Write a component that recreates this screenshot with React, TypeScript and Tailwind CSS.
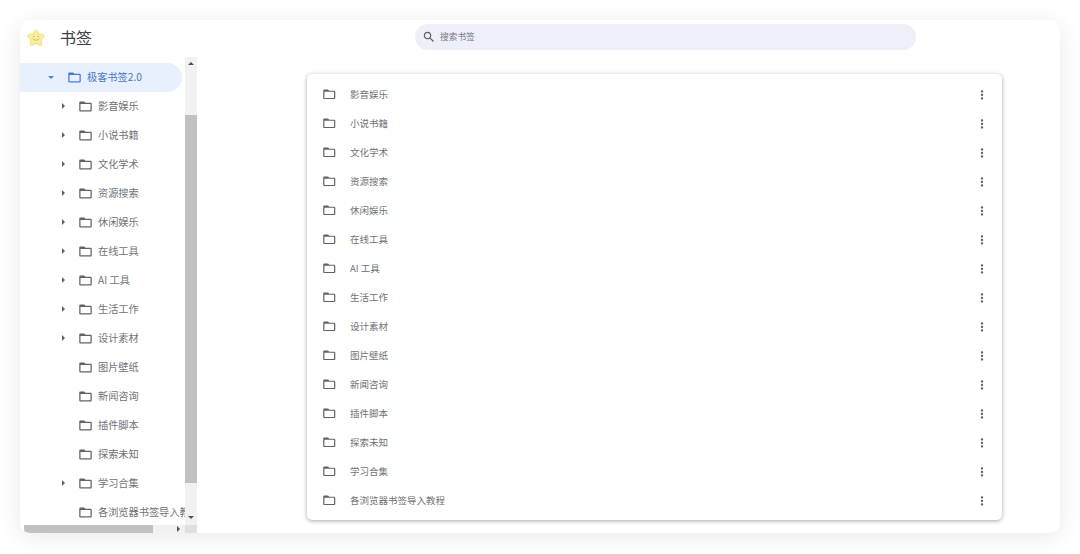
const FOLDER_PATH =
  "M20 6h-8l-2-2H4c-1.1 0-1.99.9-1.99 2L2 18c0 1.1.9 2 2 2h16c1.1 0 2-.9 2-2V8c0-1.1-.9-2-2-2zm0 12H4V8h16v10z";

const treeItems = [
  { name: "影音娱乐", hasChildren: true },
  { name: "小说书籍", hasChildren: true },
  { name: "文化学术", hasChildren: true },
  { name: "资源搜索", hasChildren: true },
  { name: "休闲娱乐", hasChildren: true },
  { name: "在线工具", hasChildren: true },
  { name: "AI 工具", hasChildren: true },
  { name: "生活工作", hasChildren: true },
  { name: "设计素材", hasChildren: true },
  { name: "图片壁纸", hasChildren: false },
  { name: "新闻咨询", hasChildren: false },
  { name: "插件脚本", hasChildren: false },
  { name: "探索未知", hasChildren: false },
  { name: "学习合集", hasChildren: true },
  { name: "各浏览器书签导入教程", hasChildren: false },
];

function FolderIcon({ className }: { className: string }) {
  return (
    <svg viewBox="0 0 24 24" fill="currentColor" className={className}>
      <path d={FOLDER_PATH} />
    </svg>
  );
}

function StarLogo() {
  return (
    <svg viewBox="0 0 24 24" className="h-[20px] w-[20px] shrink-0">
      <path
        d="M12 2.5c1 0 1.6 1 2.3 2.6l1 2.2 3.4.5c2 .3 3.1.7 3.3 1.6.2.9-.6 1.6-2 2.9l-2 1.9.6 3c.3 1.9.4 3-.4 3.5-.8.5-1.8 0-3.4-.9L12 18.4l-2.8 1.4c-1.6.9-2.6 1.4-3.4.9-.8-.5-.7-1.6-.4-3.5l.6-3-2-1.9c-1.4-1.3-2.2-2-2-2.9.2-.9 1.3-1.3 3.3-1.6l3.4-.5 1-2.2C10.4 3.5 11 2.5 12 2.5z"
        fill="#fbee9e"
        stroke="#f3dc7a"
        strokeWidth="1.2"
      />
      <path d="M8.5 13c1.5 2.3 5.5 2.3 7 0" fill="none" stroke="#b9a24a" strokeWidth="0.9" strokeLinecap="round" />
      <circle cx="9.5" cy="10" r="0.7" fill="#b9a24a" />
      <circle cx="14.5" cy="10" r="0.7" fill="#b9a24a" />
    </svg>
  );
}

function TreeRow({ name, hasChildren }: { name: string; hasChildren: boolean }) {
  return (
    <div className="flex h-[29px] shrink-0 items-center pl-[36px] text-[10.2px] whitespace-nowrap text-[#6f7276]">
      <span className="flex w-[12px] shrink-0 justify-center pl-[2px]">
        {hasChildren && (
          <span className="h-0 w-0 border-y-[3px] border-l-[3px] border-y-transparent border-l-[#5f6368]" />
        )}
      </span>
      <FolderIcon className="ml-[10px] h-[15px] w-[15px] shrink-0 text-[#5f6368]" />
      <span className="ml-[5px]">{name}</span>
    </div>
  );
}

function Sidebar() {
  return (
    <div className="flex w-[177px] shrink-0 flex-col">
      <div className="flex h-[468px]">
        <div className="flex w-[165px] flex-col overflow-hidden pt-[5.5px]">
          <div className="flex h-[29px] w-[162px] shrink-0 items-center rounded-r-full bg-[#e8f0fe] pl-[25px] text-[10.2px] whitespace-nowrap text-[#4a76c8]">
            <span className="flex w-[12px] shrink-0 justify-center">
              <span className="h-0 w-0 border-x-[3px] border-t-[3px] border-x-transparent border-t-[#4a7fd8]" />
            </span>
            <FolderIcon className="ml-[10px] h-[15px] w-[15px] shrink-0 text-[#3f7ddb]" />
            <span className="ml-[5px]">极客书签2.0</span>
          </div>
          {treeItems.map((item) => (
            <TreeRow key={item.name} name={item.name} hasChildren={item.hasChildren} />
          ))}
        </div>

        {/* vertical scrollbar */}
        <div className="flex w-[12px] shrink-0 flex-col items-center bg-[#f1f1f1]">
          <div className="flex h-[58px] w-full justify-center pt-[5px]">
            <span className="h-0 w-0 border-x-[3px] border-b-[3px] border-x-transparent border-b-[#505050]" />
          </div>
          <div className="h-[368px] w-full bg-[#c1c1c1]" />
          <div className="flex flex-1 items-end pb-[6px]">
            <span className="h-0 w-0 border-x-[3px] border-t-[3px] border-x-transparent border-t-[#505050]" />
          </div>
        </div>
      </div>

      {/* horizontal scrollbar */}
      <div className="flex h-[8px] pl-[4px]">
        <div className="flex flex-1 items-center bg-[#f1f1f1]">
          <div className="h-full w-[129px] rounded-bl-[4px] bg-[#c1c1c1]" />
          <span className="ml-[24px] h-0 w-0 border-y-[3px] border-l-[3px] border-y-transparent border-l-[#505050]" />
        </div>
        <div className="w-[12px] bg-[#dfdfdf]" />
      </div>
    </div>
  );
}

function ListRow({ name }: { name: string }) {
  return (
    <div className="flex h-[29px] items-center pr-[13px] pl-[14.5px]">
      <FolderIcon className="h-[14.5px] w-[14.5px] shrink-0 text-[#5f6368]" />
      <span className="ml-[14px] flex-1 text-[9.5px] text-[#6f7276]">{name}</span>
      <svg viewBox="0 0 24 24" fill="#5f6368" className="h-[14px] w-[14px]">
        <path d="M12 8c1.1 0 2-.9 2-2s-.9-2-2-2-2 .9-2 2 .9 2 2 2zm0 2c-1.1 0-2 .9-2 2s.9 2 2 2 2-.9 2-2-.9-2-2-2zm0 6c-1.1 0-2 .9-2 2s.9 2 2 2 2-.9 2-2-.9-2-2-2z" />
      </svg>
    </div>
  );
}

export default function App() {
  return (
    <div className="h-[554px] w-[1080px] overflow-hidden bg-white p-[20px] font-['Noto_Sans_CJK_SC','Noto_Sans',sans-serif]">
      <div className="flex h-[513px] flex-col overflow-hidden rounded-[10px] bg-white shadow-[0_4px_24px_rgba(0,0,0,0.09)]">
        {/* HEADER */}
        <div className="flex h-[37px] shrink-0 items-start pl-[6px]">
          <div className="mt-[8px]">
            <StarLogo />
          </div>
          <span className="mt-[5px] ml-[14px] text-[16px] leading-[24px] text-[#3c4043]">书签</span>
          <div className="mt-[4px] ml-[323px] flex h-[26px] w-[501px] items-center rounded-full bg-[#eef0f9] pl-[7px]">
            <svg viewBox="0 0 24 24" fill="#5a5d62" className="h-[14px] w-[14px]">
              <path d="M15.5 14h-.79l-.28-.27C15.41 12.59 16 11.11 16 9.5 16 5.91 13.09 3 9.5 3S3 5.91 3 9.5 5.91 16 9.5 16c1.61 0 3.09-.59 4.23-1.57l.27.28v.79l5 4.99L20.49 19l-4.99-5zm-6 0C7.01 14 5 11.99 5 9.5S7.01 5 9.5 5 14 7.01 14 9.5 11.99 14 9.5 14z" />
            </svg>
            <span className="ml-[4px] text-[8.7px] text-[#75787d]">搜索书签</span>
          </div>
        </div>

        <div className="flex flex-1">
          <Sidebar />

          {/* LIST */}
          <div className="flex-1 pt-[17px] pr-[58px] pl-[110px]">
            <div className="flex h-[446px] flex-col rounded-[5px] bg-white pt-[6px] shadow-[0_1px_4px_rgba(0,0,0,0.35)]">
              {treeItems.map((item) => (
                <ListRow key={item.name} name={item.name} />
              ))}
            </div>
          </div>
        </div>
      </div>
    </div>
  );
}
